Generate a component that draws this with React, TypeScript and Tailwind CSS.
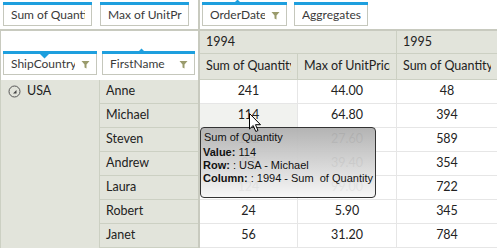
import React from "react";

function Filter() {
  return (
    <svg width="9" height="9" viewBox="0 0 9 9" className="ml-[6px] shrink-0">
      <path d="M0.5 1 H8.5 L5.5 4.5 V8.5 L3.5 7.5 V4.5 Z" fill="#9a9b6c" />
    </svg>
  );
}

function Chip({
  label,
  w,
  filter,
  tri,
  triX,
}: {
  label: string;
  w: string;
  filter?: boolean;
  tri?: "up" | "down";
  triX?: string;
}) {
  return (
    <div className={`relative h-[24px] shrink-0 bg-white ${w}`}>
      <div className="h-[3px] bg-[#1e9fde]" />
      <div className="flex h-[21px] items-center overflow-hidden whitespace-nowrap border border-t-0 border-[#c5c7bc] pl-[7px] pr-[6px] text-[12px] text-[#3a3a3a]">
        <span className="min-w-0 flex-1 overflow-hidden">{label}</span>
        {filter && <Filter />}
      </div>
      {tri === "up" && (
        <svg width="9" height="5" viewBox="0 0 9 5" className={`absolute top-[-3px] ${triX}`}>
          <path d="M0 5 L4.5 0.5 L9 5 Z" fill="#1e9fde" />
        </svg>
      )}
      {tri === "down" && (
        <svg width="9" height="5" viewBox="0 0 9 5" className={`absolute top-[3px] ${triX}`}>
          <path d="M0 0 L4.5 4.5 L9 0 Z" fill="#1e9fde" />
        </svg>
      )}
    </div>
  );
}

function HCell({ text, cls }: { text: string; cls: string }) {
  return (
    <div className={`flex items-center border-b border-[#ccd0c3] pl-[6px] pr-[6px] ${cls}`}>
      <span className="block min-w-0 flex-1 overflow-hidden whitespace-nowrap">{text}</span>
    </div>
  );
}

const names = ["Anne", "Michael", "Steven", "Andrew", "Laura", "Robert", "Janet"];
const data: [string, string, string][] = [
  ["241", "44.00", "48"],
  ["114", "64.80", "394"],
  ["182", "27.60", "589"],
  ["97", "39.40", "354"],
  ["124", "99.00", "722"],
  ["24", "5.90", "345"],
  ["56", "31.20", "784"],
];

export default function App() {
  return (
    <div className="relative h-[248px] w-[497px] overflow-hidden bg-white font-['Lato',sans-serif] text-[12.5px] text-[#222]">
      {/* top bar */}
      <div className="flex h-[31px] border-b-2 border-[#c8cabf]">
        <div className="flex w-[200px] gap-[8px] border-r-2 border-[#c8cabf] pl-[3px] pt-[2px]">
          <Chip label="Sum of Quantity" w="w-[89px]" />
          <Chip label="Max of UnitPrice" w="w-[89px]" />
        </div>
        <div className="flex gap-[7px] pl-[2px] pt-[2px]">
          <Chip label="OrderDate" w="w-[85px]" filter tri="up" triX="left-[31px]" />
          <Chip label="Aggregates" w="w-[74px]" />
        </div>
      </div>

      {/* middle */}
      <div className="flex h-[49px]">
        <div className="flex w-[200px] items-end gap-[5px] border-r-2 border-l border-[#c8cabf] pb-[5px] pl-[2px]">
          <Chip label="ShipCountry" w="w-[94px]" filter tri="down" triX="left-[37px]" />
          <Chip label="FirstName" w="w-[93px]" filter tri="up" triX="left-[35px]" />
        </div>
        <div className="grid flex-1 grid-cols-[98px_99px_100px] grid-rows-[23px_26px] bg-[#e2e4db]">
          <HCell text="1994" cls="col-span-2 border-r" />
          <HCell text="1995" cls="" />
          <HCell text="Sum of Quantity" cls="border-r" />
          <HCell text="Max of UnitPrice" cls="border-r" />
          <HCell text="Sum of Quantity" cls="" />
        </div>
      </div>

      {/* body */}
      <div className="flex">
        <div className="h-[168px] w-[100px] border-r border-l border-[#ccd0c3] bg-[#e2e4db]">
          <div className="flex h-[23px] items-center gap-[6px] pl-[7px] text-[#222]">
            <svg width="13" height="13" viewBox="0 0 13 13">
              <circle cx="6.5" cy="6.5" r="5.5" fill="none" stroke="#555" strokeWidth="1" />
              <path d="M8.5 5 V8.5 H5 Z" fill="#444" />
            </svg>
            <span>USA</span>
          </div>
        </div>
        <div className="w-[100px] border-r-2 border-[#c8cabf] bg-[#e2e4db]">
          {names.map((n) => (
            <div key={n} className="flex h-[24px] items-center border-b border-[#ccd0c3] pl-[6px] text-[#222]">
              {n}
            </div>
          ))}
        </div>
        <div className="grid flex-1 grid-cols-[98px_99px_100px] auto-rows-[24px]">
          {data.map((r, i) => (
            <React.Fragment key={i}>
              <div className={`flex items-center justify-center border-b border-r border-[#e6e6e6] ${i === 1 ? "bg-[#f1f2ef]" : "bg-white"}`}>{r[0]}</div>
              <div className="flex items-center justify-center border-b border-r border-[#e6e6e6]">{r[1]}</div>
              <div className="flex items-center justify-center border-b border-[#e6e6e6]">{r[2]}</div>
            </React.Fragment>
          ))}
        </div>
      </div>

      {/* tooltip */}
      <div className="absolute left-[200px] top-[127px] h-[71px] w-[176px] whitespace-nowrap rounded-[4px] border border-[#333] bg-gradient-to-b from-[#b0b0b0]/95 to-[#f6f6f6]/95 pl-[2px] pt-[3px] font-['Liberation_Sans',sans-serif] text-[11px] leading-[13px] text-[#111]">
        <div className="pl-[1px]">Sum of Quantity</div>
        <div className="mt-[2px]"><b>Value:</b> 114</div>
        <div><b>Row:</b> : USA - Michael</div>
        <div><b>Column:</b> : 1994 - Sum&nbsp; of Quantity</div>
      </div>

      {/* cursor */}
      <svg width="13" height="20" viewBox="0 0 13 20" className="absolute left-[249px] top-[113px]">
        <path d="M0.5 0.5 L0.5 16 L4.2 12.5 L6.8 18.5 L9 17.5 L6.5 11.7 L11.5 11.7 Z" fill="#fff" stroke="#000" strokeWidth="1" />
      </svg>
    </div>
  );
}
